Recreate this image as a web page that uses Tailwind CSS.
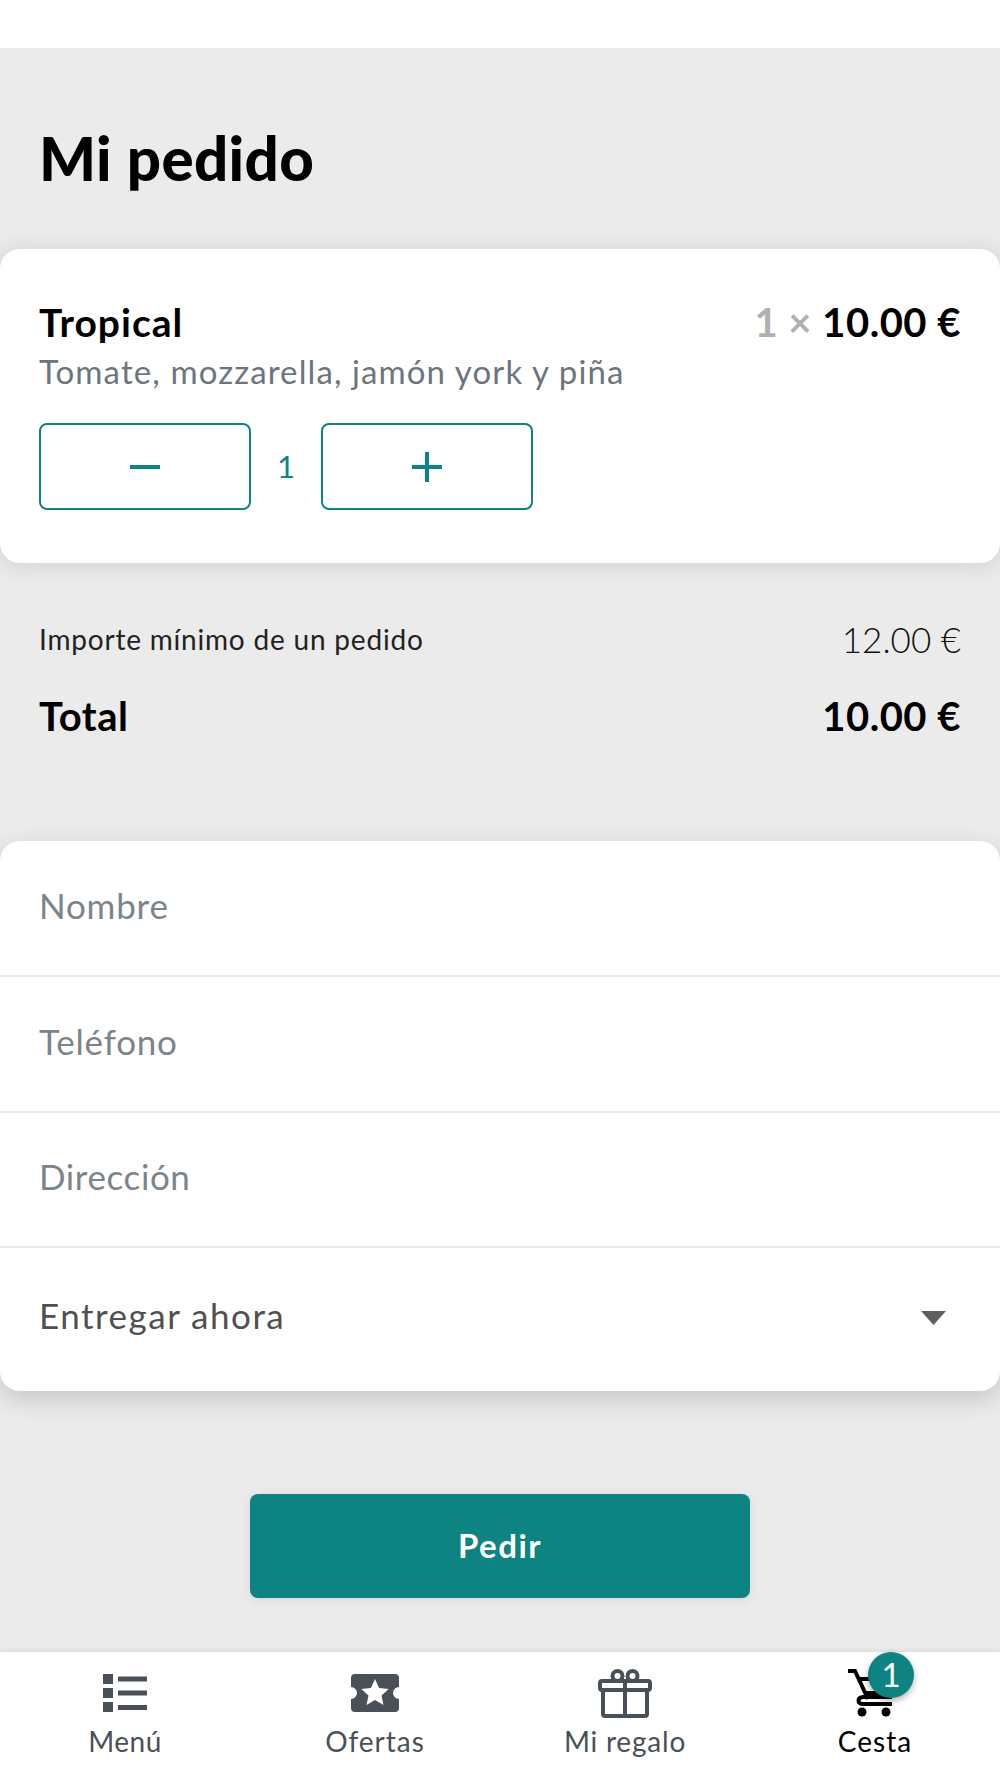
<!DOCTYPE html>
<html lang="es">
<head>
    <meta charset="UTF-8">
    <title>Mi pedido</title>
    <script src="https://cdn.jsdelivr.net/npm/@tailwindcss/browser@4"></script>
</head>
<body class="bg-[#ebebeb] font-['Lato',sans-serif]">
    <div class="flex flex-col h-[1778px] w-[1000px] overflow-hidden">
        <div class="h-[48px] bg-white"></div>

        <h1 class="h-[201px] flex items-center pl-[39px] pt-[19px] text-[60px] font-black text-black tracking-[0.4px]">Mi pedido</h1>

        <!-- order line -->
        <div class="h-[314px] bg-white rounded-[20px] shadow-[0_2px_24px_rgba(0,0,0,0.12)] px-[39px] pt-[50px]">
            <div class="flex justify-between items-center h-[46px]">
                <span class="text-[39px] font-bold text-black tracking-[1px]">Tropical</span>
                <span class="text-[40px] font-bold text-black tracking-[0.5px]"><span class="text-[#b0b0b0]">1 &times;</span> 10.00 €</span>
            </div>
            <p class="h-[52px] leading-[52px] text-[33px] text-[#6c757d] tracking-[1.1px]">Tomate, mozzarella, jamón york y piña</p>
            <div class="flex items-center mt-[26px]">
                <button class="w-[212px] h-[87px] border-2 border-[#0d8482] rounded-[8px] flex items-center justify-center">
                    <svg class="w-[30px] h-[30px]" viewBox="0 0 30 30"><rect y="13" width="30" height="4" fill="#0d8482"/></svg>
                </button>
                <span class="w-[70px] text-center text-[31px] text-[#0d8482]">1</span>
                <button class="w-[212px] h-[87px] border-2 border-[#0d8482] rounded-[8px] flex items-center justify-center">
                    <svg class="w-[30px] h-[30px]" viewBox="0 0 30 30"><path d="M13 0h4v13h13v4H17v13h-4V17H0v-4h13z" fill="#0d8482"/></svg>
                </button>
            </div>
        </div>

        <!-- totals -->
        <div class="h-[278px] px-[39px] pt-[56px]">
            <div class="flex justify-between items-center h-[40px]">
                <span class="text-[28px] text-[#222] tracking-[0.8px]">Importe mínimo de un pedido</span>
                <span class="text-[35px] font-light text-[#111]">12.00 €</span>
            </div>
            <div class="flex justify-between items-center h-[40px] mt-[37px]">
                <span class="text-[40px] font-bold text-black tracking-[0.5px]">Total</span>
                <span class="text-[40px] font-bold text-black tracking-[0.5px]">10.00 €</span>
            </div>
        </div>

        <!-- customer form -->
        <form class="h-[550px] bg-white rounded-[20px] shadow-[0_8px_24px_rgba(0,0,0,0.16)] flex flex-col">
            <input type="text" placeholder="Nombre" class="h-[136px] shrink-0 px-[39px] pb-[7px] text-[35px] tracking-[0.8px] border-b-2 border-[#e8e8e8] outline-none placeholder:text-[#7c848b]">
            <input type="text" placeholder="Teléfono" class="h-[136px] shrink-0 px-[39px] pb-[7px] text-[35px] tracking-[0.8px] border-b-2 border-[#e8e8e8] outline-none placeholder:text-[#7c848b]">
            <input type="text" placeholder="Dirección" class="h-[135px] shrink-0 px-[39px] pb-[8px] text-[35px] tracking-[0.6px] border-b-2 border-[#e8e8e8] outline-none placeholder:text-[#7c848b]">
            <div class="flex-1 flex items-center justify-between pl-[39px] pr-[54px] pb-[8px]">
                <span class="text-[35px] text-[#505050] tracking-[1.5px]">Entregar ahora</span>
                <svg class="mt-[4px] w-[25px] h-[14px]" viewBox="0 0 25 14"><path d="M0 0h25L12.5 14z" fill="#5f5f5f"/></svg>
            </div>
        </form>

        <div class="flex-1 flex justify-center pt-[103px]">
            <button class="w-[500px] h-[104px] rounded-[8px] bg-[#0d8482] text-white text-[33px] font-bold tracking-[1.5px] shadow-[0_2px_10px_rgba(100,110,200,0.15)]">Pedir</button>
        </div>

        <!-- bottom nav -->
        <nav class="h-[126px] shrink-0 bg-white grid grid-cols-4 shadow-[0_-1px_6px_rgba(0,0,0,0.08)]">
            <a class="flex flex-col items-center text-[#495057]">
                <svg class="mt-[22px] w-[44px] h-[38px]" viewBox="0 0 44 38" fill="#495057">
                    <rect width="10" height="10"/><rect y="14" width="10" height="10"/><rect y="28" width="10" height="10"/>
                    <rect x="15" y="2.500" width="29" height="5"/><rect x="15" y="16.500" width="29" height="5"/><rect x="15" y="31" width="29" height="5"/>
                </svg>
                <span class="mt-[11px] text-[28px] leading-[36px] tracking-[0.5px]">Menú</span>
            </a>
            <a class="flex flex-col items-center text-[#495057]">
                <svg class="mt-[22px] w-[48px] h-[38px]" viewBox="0 0 48 38">
                    <path d="M4 0h40a4 4 0 0 1 4 4v9a6 6 0 0 0 0 12v9a4 4 0 0 1-4 4H4a4 4 0 0 1-4-4V25a6 6 0 0 0 0-12V4a4 4 0 0 1 4-4z" fill="#495057"/>
                    <path d="M24 5l4.100 9 9.600 1-7.200 6.400 2 9.600-8.500-4.900-8.500 4.900 2-9.600-7.200-6.400 9.600-1z" fill="#fff"/>
                </svg>
                <span class="mt-[11px] text-[28px] leading-[36px] tracking-[1px]">Ofertas</span>
            </a>
            <a class="flex flex-col items-center text-[#495057]">
                <svg class="mt-[17px] w-[54px] h-[49px]" viewBox="0 0 54 49" fill="none" stroke="#495057" stroke-width="4">
                    <rect x="2" y="12" width="50" height="9" rx="2"/>
                    <path d="M5 21v24a2 2 0 0 0 2 2h40a2 2 0 0 0 2-2V21M27 12v35"/>
                    <circle cx="19.500" cy="7" r="5"/><circle cx="34.500" cy="7" r="5"/>
                </svg>
                <span class="mt-[5px] text-[28px] leading-[36px] tracking-[0.8px]">Mi regalo</span>
            </a>
            <a class="relative flex flex-col items-center text-black">
                <svg class="mt-[17px] -ml-[10px] w-[44px] h-[49px]" viewBox="0 0 44 49" fill="none" stroke="#000" stroke-width="4">
                    <path d="M0 2h7l13 28"/>
                    <path d="M44 28H15c-6 0-6 7 0 7h29"/>
                    <path d="M10 10h32l-6 14H17"/>
                    <circle cx="14" cy="43" r="4.500" fill="#000" stroke="none"/><circle cx="38" cy="43" r="4.500" fill="#000" stroke="none"/>
                </svg>
                <span class="mt-[5px] text-[28px] leading-[36px] tracking-[1px]">Cesta</span>
                <span class="absolute left-[118px] top-0 w-[46px] h-[46px] rounded-full bg-[#0d8482] text-white text-[33px] flex items-center justify-center shadow-[0_3px_6px_rgba(0,0,0,0.3)]">1</span>
            </a>
        </nav>
    </div>
</body>
</html>
